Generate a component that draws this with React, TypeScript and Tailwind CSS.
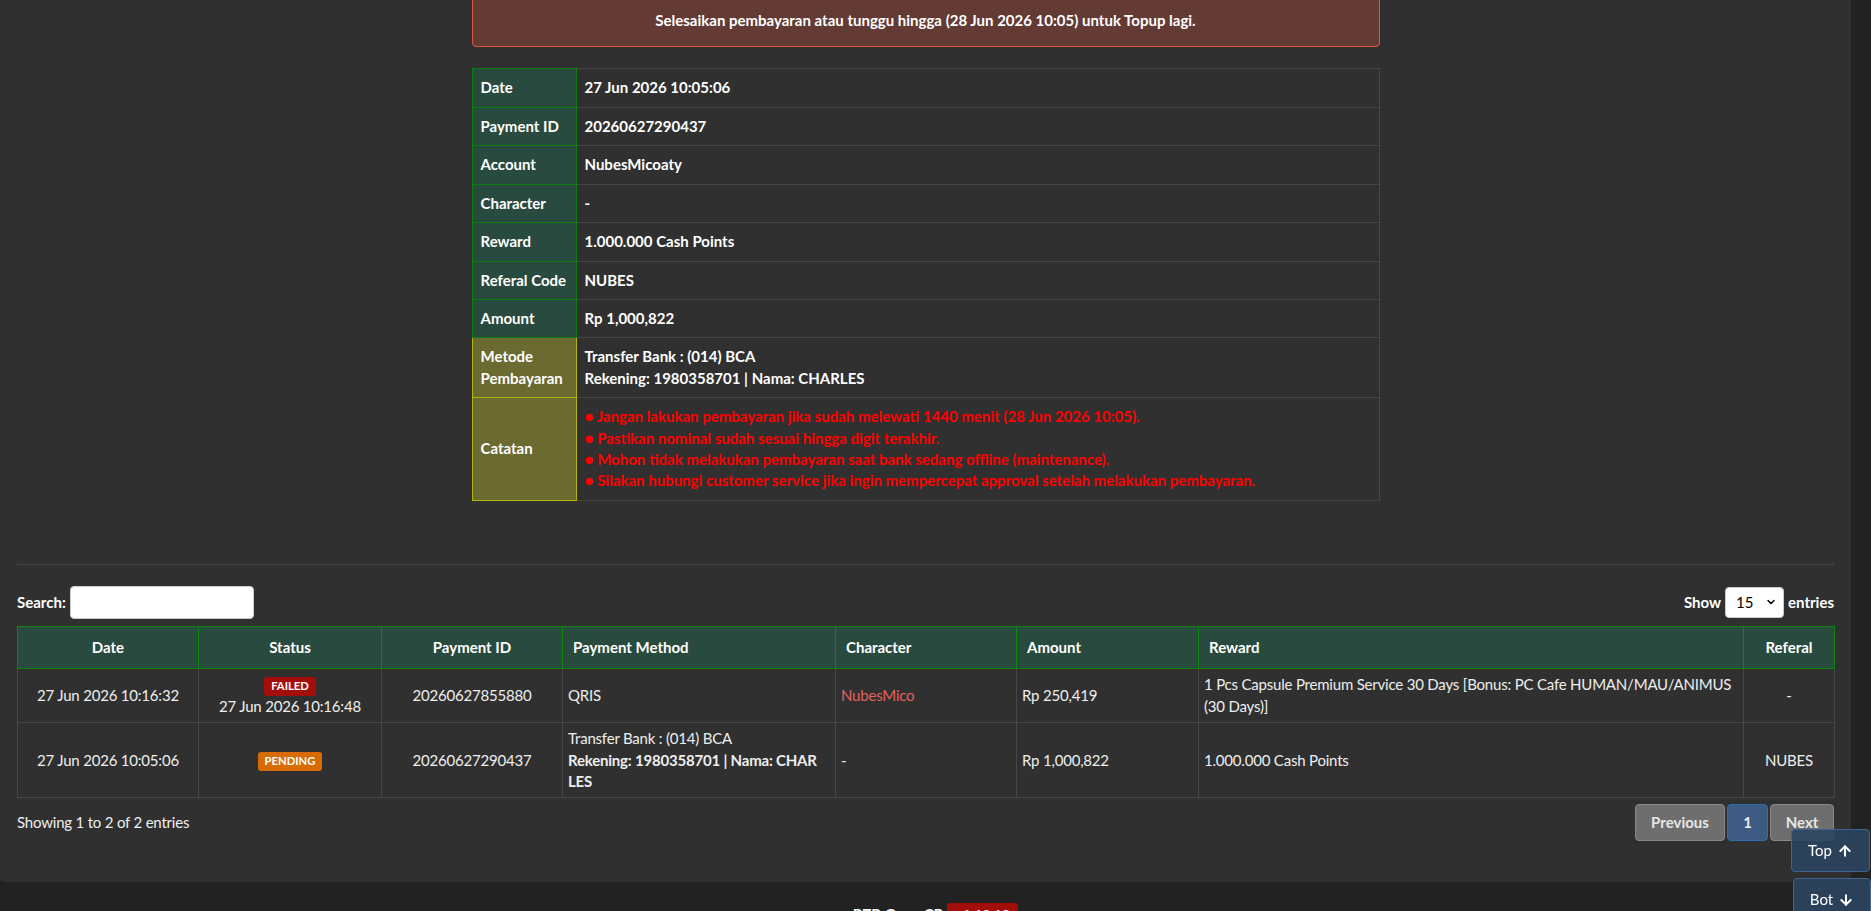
import React from "react";
import { ArrowUp, ArrowDown, ChevronDown } from "lucide-react";

const details: { label: React.ReactNode; value: React.ReactNode; kind: "g" | "y" }[] = [
  { label: "Date", value: "27 Jun 2026 10:05:06", kind: "g" },
  { label: "Payment ID", value: "20260627290437", kind: "g" },
  { label: "Account", value: "NubesMicoaty", kind: "g" },
  { label: "Character", value: "-", kind: "g" },
  { label: "Reward", value: "1.000.000 Cash Points", kind: "g" },
  { label: "Referal Code", value: "NUBES", kind: "g" },
  { label: "Amount", value: "Rp 1,000,822", kind: "g" },
  {
    label: (
      <>
        Metode
        <br />
        Pembayaran
      </>
    ),
    value: (
      <>
        Transfer Bank : (014) BCA
        <br />
        Rekening: 1980358701 | Nama: CHARLES
      </>
    ),
    kind: "y",
  },
  {
    label: "Catatan",
    value: (
      <div className="text-[#ff0000]">
        ● Jangan lakukan pembayaran jika sudah melewati 1440 menit (28 Jun 2026 10:05).
        <br />● Pastikan nominal sudah sesuai hingga digit terakhir.
        <br />● Mohon tidak melakukan pembayaran saat bank sedang offline (maintenance).
        <br />● Silakan hubungi customer service jika ingin mempercepat approval setelah melakukan pembayaran.
      </div>
    ),
    kind: "y",
  },
];

const td = "border border-[#474747] px-[5px] py-[5px] align-middle tracking-[-0.2px]";
const th = "border border-[#0b870b] px-[10px] py-[10px]";

export default function App() {
  return (
    <div className="h-[911px] overflow-hidden bg-[#222222] font-[Lato,'Noto_Sans',sans-serif] text-[15px] leading-[1.42857] text-white">
      <div className="mt-[-6px] w-[1851px] rounded-b-[4px] bg-[#303030] px-[17px] pb-[41px]">
        {/* top detail block */}
        <div className="mx-auto w-[908px]">
          <div className="rounded-[4px] border border-[#e0533f] bg-[#633a34] py-[15px] text-center font-bold text-white">
            Selesaikan pembayaran atau tunggu hingga (28 Jun 2026 10:05) untuk Topup lagi.
          </div>
          <table className="mt-[21px] w-full border-collapse font-bold">
            <tbody>
              {details.map((d, i) => (
                <tr key={i}>
                  <th
                    className={
                      d.kind === "g"
                        ? "w-[104px] whitespace-nowrap border border-[#0e7d0e] bg-[#294a3e] p-2 text-left align-middle font-bold"
                        : "w-[104px] whitespace-nowrap border border-[#b3b300] bg-[#6b6a30] p-2 text-left align-middle font-bold"
                    }
                  >
                    {d.label}
                  </th>
                  <td className="border border-[#474747] p-2 align-middle">{d.value}</td>
                </tr>
              ))}
            </tbody>
          </table>
        </div>

        <div className="mt-[63px] border-t border-[#474747]" />

        {/* controls */}
        <div className="mt-[21px] flex h-[33px] items-center justify-between">
          <div className="flex items-center font-bold">
            <span>Search:</span>
            <div className="ml-[4px] h-[33px] w-[184px] rounded-[4px] border border-[#cccccc] bg-white" />
          </div>
          <div className="flex items-center font-bold">
            <span>Show</span>
            <div className="mx-[4px] flex h-[31px] w-[59px] items-center justify-between rounded-[4px] border border-[#cccccc] bg-white pl-[10px] pr-[6px] font-normal text-black">
              <span>15</span>
              <ChevronDown size={12} strokeWidth={3} />
            </div>
            <span>entries</span>
          </div>
        </div>

        {/* data table */}
        <table className="mt-[7px] w-full table-fixed border-collapse text-[#eeeeee]">
          <colgroup>
            <col className="w-[181px]" />
            <col className="w-[183px]" />
            <col className="w-[181px]" />
            <col className="w-[273px]" />
            <col className="w-[181px]" />
            <col className="w-[182px]" />
            <col className="w-[545px]" />
            <col className="w-[91px]" />
          </colgroup>
          <thead>
            <tr className="bg-[#294a3e] font-bold text-white">
              <th className={`${th} text-center`}>Date</th>
              <th className={`${th} text-center`}>Status</th>
              <th className={`${th} text-center`}>Payment ID</th>
              <th className={`${th} text-left`}>Payment Method</th>
              <th className={`${th} text-left`}>Character</th>
              <th className={`${th} text-left`}>Amount</th>
              <th className={`${th} text-left`}>Reward</th>
              <th className={`${th} text-center`}>Referal</th>
            </tr>
          </thead>
          <tbody>
            <tr>
              <td className={`${td} text-center`}>27 Jun 2026 10:16:32</td>
              <td className={`${td} text-center`}>
                <span className="rounded-[3px] bg-[#a30e0a] px-[0.6em] pt-[0.2em] pb-[0.3em] text-[75%] font-bold leading-none tracking-normal text-white">
                  FAILED
                </span>
                <br />
                27 Jun 2026 10:16:48
              </td>
              <td className={`${td} text-center`}>20260627855880</td>
              <td className={`${td} text-left`}>QRIS</td>
              <td className={`${td} text-left text-[#e06060]`}>NubesMico</td>
              <td className={`${td} text-left`}>Rp 250,419</td>
              <td className={`${td} text-left`}>
                1 Pcs Capsule Premium Service 30 Days [Bonus: PC Cafe HUMAN/MAU/ANIMUS (30 Days)]
              </td>
              <td className={`${td} text-center`}>-</td>
            </tr>
            <tr>
              <td className={`${td} text-center`}>27 Jun 2026 10:05:06</td>
              <td className={`${td} text-center`}>
                <span className="rounded-[3px] bg-[#d76c05] px-[0.6em] pt-[0.2em] pb-[0.3em] text-[75%] font-bold leading-none tracking-normal text-white">
                  PENDING
                </span>
              </td>
              <td className={`${td} text-center`}>20260627290437</td>
              <td className={`${td} text-left break-all`}>
                Transfer Bank : (014) BCA
                <br />
                <b className="font-bold">
                  Rekening: 1980358701 | Nama: CHAR
                  <br />
                  LES
                </b>
              </td>
              <td className={`${td} text-left`}>-</td>
              <td className={`${td} text-left`}>Rp 1,000,822</td>
              <td className={`${td} text-left`}>1.000.000 Cash Points</td>
              <td className={`${td} text-center`}>NUBES</td>
            </tr>
          </tbody>
        </table>

        {/* footer of table */}
        <div className="mt-[6px] flex items-center justify-between">
          <div className="tracking-[-0.2px] text-[#eeeeee]">Showing 1 to 2 of 2 entries</div>
          <div className="flex gap-[2px] font-bold">
            <div className="flex h-[37px] w-[90px] items-center justify-center rounded-[4px] border border-[#8a8a8a] bg-[#6e6e6e] text-[#e6e6e6]">
              Previous
            </div>
            <div className="flex h-[37px] w-[41px] items-center justify-center rounded-[4px] border border-[#2f6cb0] bg-[#3c5a82] text-[#eaeaea]">
              1
            </div>
            <div className="flex h-[37px] w-[64px] items-center justify-center rounded-[4px] border border-[#8a8a8a] bg-[#6e6e6e] text-[#e6e6e6]">
              Next
            </div>
          </div>
        </div>
      </div>

      {/* page footer */}
      <div className="flex items-start justify-center gap-[4px] pt-[22px] font-bold">
        <span>RZR GameCP</span>
        <span className="mt-[-1px] rounded-[3px] bg-[#a30e0a] px-[0.6em] pt-[0.1em] text-[14px]">v1.12.13</span>
      </div>

      {/* floating buttons */}
      <div className="fixed right-[1px] top-[829px] flex h-[43px] w-[79px] items-center justify-center gap-[5px] rounded-[4px] border border-[#3e6592] bg-[#2c4560]/90 text-white">
        <span>Top</span>
        <ArrowUp size={16} strokeWidth={3} />
      </div>
      <div className="fixed right-[0px] top-[878px] flex h-[43px] w-[78px] items-center justify-center gap-[5px] rounded-[4px] border border-[#3e6592] bg-[#2c4560]/90 text-white">
        <span>Bot</span>
        <ArrowDown size={16} strokeWidth={3} />
      </div>
    </div>
  );
}
